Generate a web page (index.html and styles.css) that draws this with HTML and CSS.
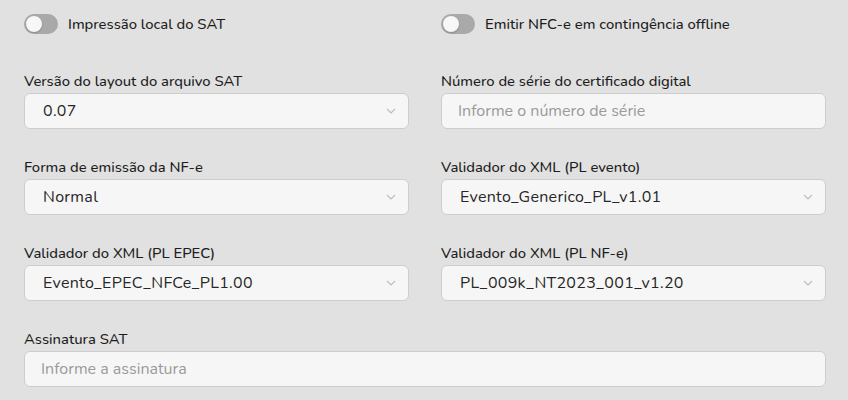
FILE: index.html
```html
<!DOCTYPE html>
<html lang="pt-BR">
<head>
<meta charset="utf-8">
<link rel="stylesheet" href="styles.css">
</head>
<body>
<div class="page">
  <div class="toggles">
    <label class="toggle"><span class="switch"><span class="knob"></span></span><span class="toggle-text">Impressão local do SAT</span></label>
    <label class="toggle"><span class="switch"><span class="knob"></span></span><span class="toggle-text">Emitir NFC-e em contingência offline</span></label>
  </div>
  <div class="grid">
    <div class="field">
      <div class="label">Versão do layout do arquivo SAT</div>
      <div class="input select"><span class="value">0.07</span><svg class="chev" viewBox="0 0 10 6" width="10" height="6"><path d="M1 1l4 4 4-4" fill="none" stroke="#bdbdbd" stroke-width="1.2"/></svg></div>
    </div>
    <div class="field">
      <div class="label">Número de série do certificado digital</div>
      <div class="input text"><span class="ph">Informe o número de série</span></div>
    </div>
    <div class="field">
      <div class="label">Forma de emissão da NF-e</div>
      <div class="input select"><span class="value">Normal</span><svg class="chev" viewBox="0 0 10 6" width="10" height="6"><path d="M1 1l4 4 4-4" fill="none" stroke="#bdbdbd" stroke-width="1.2"/></svg></div>
    </div>
    <div class="field">
      <div class="label">Validador do XML (PL evento)</div>
      <div class="input select"><span class="value">Evento_Generico_PL_v1.01</span><svg class="chev" viewBox="0 0 10 6" width="10" height="6"><path d="M1 1l4 4 4-4" fill="none" stroke="#bdbdbd" stroke-width="1.2"/></svg></div>
    </div>
    <div class="field">
      <div class="label">Validador do XML (PL EPEC)</div>
      <div class="input select"><span class="value">Evento_EPEC_NFCe_PL1.00</span><svg class="chev" viewBox="0 0 10 6" width="10" height="6"><path d="M1 1l4 4 4-4" fill="none" stroke="#bdbdbd" stroke-width="1.2"/></svg></div>
    </div>
    <div class="field">
      <div class="label">Validador do XML (PL NF-e)</div>
      <div class="input select"><span class="value">PL_009k_NT2023_001_v1.20</span><svg class="chev" viewBox="0 0 10 6" width="10" height="6"><path d="M1 1l4 4 4-4" fill="none" stroke="#bdbdbd" stroke-width="1.2"/></svg></div>
    </div>
    <div class="field wide">
      <div class="label">Assinatura SAT</div>
      <div class="input text sig"><span class="ph">Informe a assinatura</span></div>
    </div>
  </div>
</div>
</body>
</html>
```
FILE: styles.css
```css
* { box-sizing: border-box; }
html, body { margin: 0; padding: 0; }
body {
  background: #e1e1e1;
  font-family: "Nunito", "Lato", "Open Sans", sans-serif;
  color: #1f1f1f;
  width: 848px;
  height: 400px;
  overflow: hidden;
}
.page { padding: 14px 22px 0 24px; }
.toggles {
  display: grid;
  grid-template-columns: 385px 385px;
  column-gap: 32px;
}
.toggle { display: flex; align-items: center; gap: 10px; height: 20px; }
.switch {
  width: 34px; height: 20px; border-radius: 10px;
  background: #a9a9a9;
  display: flex; align-items: center; padding-left: 2px;
}
.knob {
  width: 16px; height: 16px; border-radius: 50%;
  background: #f7f7f7;
  box-shadow: 0 1px 2px rgba(0,0,0,0.2);
}
.toggle-text { font-size: 14.8px; font-weight: 500; color: #1d1d1d; }
.grid {
  margin-top: 37px;
  display: grid;
  grid-template-columns: 385px 385px;
  column-gap: 32px;
  row-gap: 28px;
}
.field.wide { grid-column: 1 / span 2; }
.label { font-size: 14.8px; font-weight: 500; line-height: 20px; margin-bottom: 2px; color: #1d1d1d; }
.input {
  height: 36px;
  background: #f6f6f6;
  border: 1px solid #cdcdcd;
  border-radius: 6px;
  display: flex; align-items: center;
  font-size: 16px;
}
.input.select { padding: 0 12px 0 18px; justify-content: space-between; }
.input.text { padding: 0 16px; }
.value { color: #262626; letter-spacing: 0.3px; }
.ph { color: #9a9a9a; }
.chev { display: block; }
```
